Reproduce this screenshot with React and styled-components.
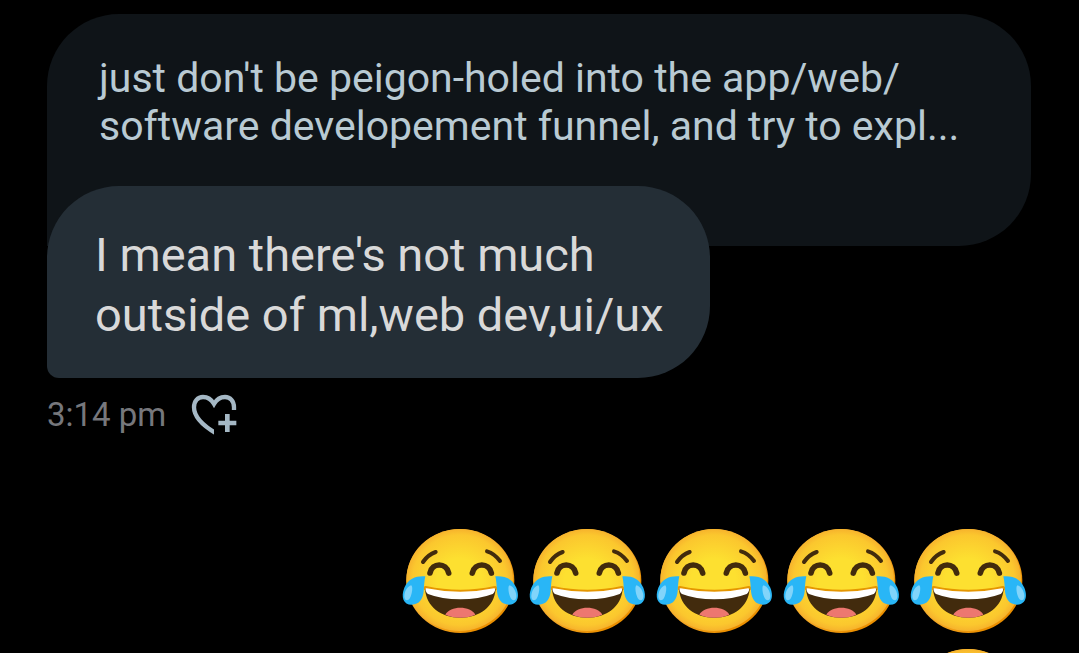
import React from "react";
import styled, { createGlobalStyle } from "styled-components";

const GlobalStyle = createGlobalStyle`
  html {
    overflow: hidden;
  }

  body {
    margin: 0;
    background: #000;
    font-family: Roboto, "Open Sans", sans-serif;
  }
`;

const Thread = styled.main`
  box-sizing: border-box;
  height: 100vh;
  padding: 14px 48px 0 47px;
  overflow: hidden;
`;

const Message = styled.article`
  display: flex;
  flex-direction: column;
  align-items: ${(props) => (props.$mine ? "flex-end" : "flex-start")};
  margin-bottom: 71px;
`;

const Quote = styled.blockquote`
  box-sizing: border-box;
  align-self: stretch;
  margin: 0;
  padding: 40px 52px 96px;
  border-radius: 72px 72px 72px 0;
  background: #0f1418;
  color: #b9cad3;
  font-size: 41px;
  line-height: 48px;
  white-space: nowrap;
`;

const Bubble = styled.p`
  margin: -60px 0 0;
  padding: 39px 46px 33px 48px;
  border-radius: 72px 72px 72px 12px;
  background: #242e36;
  color: #d9d9d9;
  font-size: 47px;
  line-height: 60px;
`;

const Meta = styled.footer`
  display: flex;
  align-items: center;
  gap: 25px;
  height: 72px;
  color: #76777c;
  font-size: 33px;
`;

const ReactButton = styled.button`
  display: flex;
  padding: 0;
  border: 0;
  background: none;
  color: #a5b8c5;
  cursor: pointer;

  svg {
    width: 48px;
    height: 42px;
  }
`;

const EmojiText = styled.div`
  display: flex;
  flex-wrap: wrap;
  justify-content: flex-end;
  max-width: 640px;

  svg {
    width: 127px;
    height: 120px;
  }
`;

function HeartPlusIcon() {
  return (
    <svg viewBox="33 24 144 126" aria-hidden="true">
      <clipPath id="heart-cut">
        <path d="M30 20H180V75H102V160H30Z" />
      </clipPath>
      <path
        d="M110 146C82 130 42 101 42 67C42 49 53 36 69 36C83 36 94 43 102 57C110 43 121 36 135 36C151 36 162 49 162 67V80"
        clipPath="url(#heart-cut)"
        fill="none"
        stroke="currentColor"
        strokeWidth="13"
      />
      <path
        d="M142 87V141M115 114H169"
        fill="none"
        stroke="currentColor"
        strokeWidth="14"
      />
    </svg>
  );
}

function Tear() {
  return (
    <>
      <path
        d="M79 169C53 167 29 174 16 203C5 231 13 254 38 254C61 254 72 237 74 214C75 197 76 182 79 169Z"
        fill="#29b6f6"
      />
      <path
        d="M36 196C24 200 15 217 16 230C17 243 27 244 33 234C39 223 43 198 36 196Z"
        fill="#81d4fa"
      />
    </>
  );
}

function JoyEmoji() {
  return (
    <svg viewBox="-9 3 381 360" role="img" aria-label="Face with tears of joy">
      <ellipse cx="184" cy="183" rx="162" ry="156" fill="url(#joy-shade)" />
      <ellipse cx="182" cy="180" rx="160" ry="153" fill="url(#joy-skin)" />
      <g fill="none" stroke="#422b0d" strokeLinecap="round">
        <path d="M72 126Q87 104 110 96" strokeWidth="12" />
        <path d="M264 94Q287 101 303 123" strokeWidth="12" />
        <path d="M93 159C99 127 142 127 149 159" strokeWidth="17" />
        <path d="M220 159C227 127 270 127 277 159" strokeWidth="17" />
      </g>
      <path
        d="M80 205Q184 228 288 205"
        fill="none"
        stroke="#e59600"
        strokeWidth="14"
        strokeLinecap="round"
      />
      <path
        d="M78 207C82 260 126 293 184 293C242 293 286 260 290 207Q184 232 78 207Z"
        fill="#422b0d"
      />
      <path
        d="M139 284C153 256 215 256 229 284Q210 293 184 293Q158 293 139 284Z"
        fill="#ed7770"
      />
      <path
        d="M83 205Q184 226 285 205C291 204 289 216 281 222Q240 238 184 238Q128 238 87 222C79 216 77 204 83 205Z"
        fill="#fff"
      />
      <Tear />
      <g transform="translate(368 0) scale(-1 1)">
        <Tear />
      </g>
    </svg>
  );
}

// gradients shared by every emoji on the page
function EmojiGradients() {
  return (
    <svg width="0" height="0" style={{ display: "block" }} aria-hidden="true">
      <defs>
        <radialGradient id="joy-skin" cx="50%" cy="50%" r="52%">
          <stop offset="0.4" stopColor="#fde030" />
          <stop offset="0.85" stopColor="#fbc72e" />
          <stop offset="1" stopColor="#f5ac2c" />
        </radialGradient>
        <linearGradient id="joy-shade" x1="0" y1="0" x2="1" y2="1">
          <stop offset="0.5" stopColor="#f5ac2c" />
          <stop offset="0.8" stopColor="#eb8f00" />
        </linearGradient>
      </defs>
    </svg>
  );
}

function App() {
  return (
    <>
      <GlobalStyle />
      <EmojiGradients />
      <Thread>
        <Message>
          <Quote>
            just don't be peigon-holed into the app/web/
            <br />
            software developement funnel, and try to expl...
          </Quote>
          <Bubble>
            I mean there's not much
            <br />
            outside of ml,web dev,ui/ux
          </Bubble>
          <Meta>
            <time dateTime="15:14">3:14 pm</time>
            <ReactButton type="button" aria-label="Add reaction">
              <HeartPlusIcon />
            </ReactButton>
          </Meta>
        </Message>
        <Message $mine>
          <EmojiText>
            {[1, 2, 3, 4, 5, 6].map((n) => (
              <JoyEmoji key={n} />
            ))}
          </EmojiText>
        </Message>
      </Thread>
    </>
  );
}

export default App;
